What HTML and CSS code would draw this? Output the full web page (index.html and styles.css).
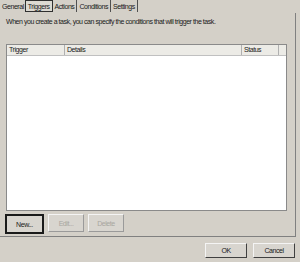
FILE: index.html
```html
<!DOCTYPE html>
<html lang="en">
<head>
    <meta charset="UTF-8">
    <title>Task Properties - Triggers</title>
    <link rel="stylesheet" href="styles.css">
</head>
<body>
    <div class="dialog">
        <div class="tabs">
            <span class="tab">General</span>
            <span class="tab selected">Triggers</span>
            <span class="tab">Actions</span>
            <span class="tab">Conditions</span>
            <span class="tab">Settings</span>
        </div>

        <div class="panel">
            <p class="desc">When you create a task, you can specify the conditions that will trigger the task.</p>

            <div class="list">
                <div class="list-head">
                    <span class="col col-trigger">Trigger</span>
                    <span class="col col-details">Details</span>
                    <span class="col col-status">Status</span>
                    <span class="col col-rest"></span>
                </div>
            </div>

            <div class="actions">
                <button class="btn default">New...</button>
                <button class="btn" disabled>Edit...</button>
                <button class="btn" disabled>Delete</button>
            </div>
        </div>

        <div class="footer">
            <button class="btn wide">OK</button>
            <button class="btn wide">Cancel</button>
        </div>
    </div>
</body>
</html>
```

FILE: styles.css
```css
body {
    margin: 0;
    padding: 0;
    background-color: #d4d0c8;
    font-family: "Liberation Sans", Arial, sans-serif;
    font-size: 7px;
    letter-spacing: -0.45px;
    color: #1a1a1a;
}

.dialog {
    width: 300px;
    height: 262px;
    overflow: hidden;
}

.tabs {
    display: flex;
    height: 13px;
    padding-left: 0;
}

.tab {
    display: flex;
    align-items: center;
    padding: 0 2px;
    height: 12px;
    border-right: 1px solid #505050;
}

.tab:first-child {
    border-right: none;
    padding: 0 1px 0 2px;
}

.tab.selected {
    border: 1px solid #303030;
    height: 10px;
    padding: 0 2px;
    background-color: #dcd9d2;
}

.panel {
    width: 296px;
    height: 224px;
    border-right: 1px solid #808080;
    border-bottom: 1px solid #808080;
    box-sizing: border-box;
    padding: 5px 7px 0 6px;
}

.desc {
    margin: 0;
    height: 26px;
}

.list {
    width: 281px;
    height: 167px;
    background-color: #ffffff;
    border: 1px solid #8a8a8a;
    box-sizing: border-box;
}

.list-head {
    display: flex;
    height: 10px;
    background-color: #ecebe6;
    border-bottom: 1px solid #c0c0c0;
}

.col {
    box-sizing: border-box;
    padding-left: 2px;
    line-height: 10px;
    border-right: 1px solid #b0b0b0;
}

.col-trigger { width: 58px; }
.col-details { width: 177px; }
.col-status { width: 37px; }
.col-rest { flex: 1; border-right: none; }

.actions {
    display: flex;
    gap: 4px;
    margin-top: 3px;
    margin-left: -1px;
}

.btn {
    font-family: "Liberation Sans", Arial, sans-serif;
    font-size: 7px;
    letter-spacing: -0.45px;
    color: #1a1a1a;
    width: 36px;
    height: 18px;
    padding: 0;
    background-color: #d8d5cf;
    border: 1px solid #9a9a9a;
    border-top-color: #f4f4f4;
    border-left-color: #f4f4f4;
    box-sizing: border-box;
}

.btn.default {
    width: 39px;
    height: 20px;
    border: 2px solid #1a1a1a;
}

.btn:disabled {
    color: #a8a6a0;
}

.footer {
    display: flex;
    justify-content: flex-end;
    gap: 6px;
    padding: 6px 5px 0 0;
}

.btn.wide {
    width: 42px;
    height: 15px;
    border-right-color: #404040;
    border-bottom-color: #404040;
}
```
